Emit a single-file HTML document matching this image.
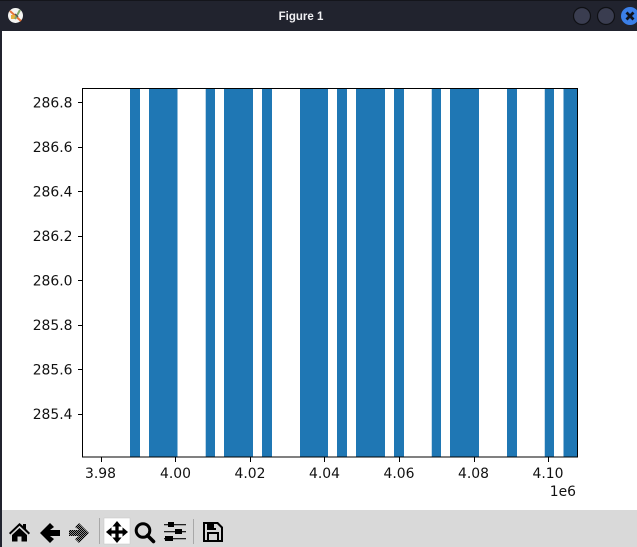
<!DOCTYPE html>
<html><head><meta charset="utf-8"><style>
html,body{margin:0;padding:0;width:637px;height:547px;overflow:hidden;background:#fff}
svg{display:block}
text{font-family:"DejaVu Sans",sans-serif}
</style></head><body>
<svg width="637" height="547" viewBox="0 0 637 547" xmlns="http://www.w3.org/2000/svg">
<rect width="637" height="547" fill="#fff"/>
<!-- title bar -->
<rect width="637" height="31" fill="#21232e"/>
<rect width="637" height="1" fill="#14151b"/>
<rect x="0" y="31" width="2" height="516" fill="#21232e"/>
<circle cx="15.500" cy="15.500" r="7.500" fill="#f4f4f2"/>
<path d="M10 11L21 21" stroke="#e8763a" stroke-width="2"/>
<path d="M11 15h5v4h-5z" fill="#e7b23f"/>
<path d="M15 19L20 10" stroke="#7fa86a" stroke-width="2"/>
<path d="M15 14l3 3" stroke="#555" stroke-width="1.500"/>
<text x="301" y="20" font-size="11.500" font-weight="bold" fill="#f0f0f3" text-anchor="middle" style='font-family:"Liberation Sans",sans-serif'>Figure 1</text>
<circle cx="582" cy="16" r="8.500" fill="#3a3d50" stroke="#0f1014" stroke-width="1.200"/>
<circle cx="606" cy="16" r="8.500" fill="#3a3d50" stroke="#0f1014" stroke-width="1.200"/>
<circle cx="630" cy="16" r="9" fill="#3b7fe8"/>
<path d="M626.500 12.500L633.500 19.500M633.500 12.500L626.500 19.500" stroke="#10131c" stroke-width="2.800"/>
<!-- bars -->
<g fill="#1f77b4">
<rect x="130" y="89" width="10" height="368"/>
<rect x="149" y="89" width="28" height="368"/>
<rect x="206" y="89" width="9" height="368"/>
<rect x="224" y="89" width="29" height="368"/>
<rect x="262" y="89" width="10" height="368"/>
<rect x="300" y="89" width="28" height="368"/>
<rect x="337" y="89" width="10" height="368"/>
<rect x="356" y="89" width="29" height="368"/>
<rect x="394" y="89" width="10" height="368"/>
<rect x="432" y="89" width="9" height="368"/>
<rect x="450" y="89" width="29" height="368"/>
<rect x="507" y="89" width="10" height="368"/>
<rect x="545" y="89" width="9" height="368"/>
<rect x="563.500" y="89" width="14" height="368"/>
</g>
<g fill="#8fbbd9">
<rect x="177" y="89" width="1" height="368"/>
<rect x="205" y="89" width="1" height="368" opacity=".6"/>
<rect x="431" y="89" width="1" height="368" opacity=".5"/>
<rect x="544" y="89" width="1" height="368" opacity=".5"/>
</g>
<!-- axes -->
<rect x="82.500" y="88.500" width="495" height="368.500" fill="none" stroke="#000" stroke-width="1"/>
<g stroke="#000" stroke-width="1">
<path d="M101.500 457v5M175.500 457v5M250.500 457v5M324.500 457v5M399.500 457v5M474.500 457v5M548.500 457v5"/>
<path d="M78 102.500h4.500M78 147.500h4.500M78 191.500h4.500M78 236.500h4.500M78 280.500h4.500M78 325.500h4.500M78 369.500h4.500M78 414.500h4.500"/>
</g>
<g font-size="13.900" fill="#111" text-anchor="middle">
<text x="100.500" y="478">3.98</text>
<text x="175.500" y="478">4.00</text>
<text x="250" y="478">4.02</text>
<text x="324.500" y="478">4.04</text>
<text x="399" y="478">4.06</text>
<text x="473.500" y="478">4.08</text>
<text x="548" y="478">4.10</text>
</g>
<text x="576" y="496" font-size="13.900" fill="#111" text-anchor="end">1e6</text>
<g font-size="13.900" fill="#111" text-anchor="end">
<text x="72.500" y="107.500">286.8</text>
<text x="72.500" y="152">286.6</text>
<text x="72.500" y="196.500">286.4</text>
<text x="72.500" y="241">286.2</text>
<text x="72.500" y="285.500">286.0</text>
<text x="72.500" y="330">285.8</text>
<text x="72.500" y="374.500">285.6</text>
<text x="72.500" y="419">285.4</text>
</g>
<!-- toolbar -->
<rect x="2" y="510" width="635" height="37" fill="#d9d9d9"/>
<rect x="99" y="518" width="1" height="26" fill="#a8a8a8"/>
<rect x="193" y="519" width="1" height="25" fill="#a8a8a8"/>
<rect x="104" y="518" width="26" height="26" fill="#fff" stroke="#c4c4c4" stroke-width=".5"/>
<!-- home -->
<path d="M19.500 523L9 533l1.300 1.500 9.200-8.700 9.200 8.700L30 533l-4-4v-5h-3v2z" fill="#000"/>
<path d="M12 535l7.500-7 7.500 7v6.500h-5.500v-5h-4v5H12z" fill="#000"/>
<!-- back -->
<path d="M50 523l4 4-4 3h10v6H50l4 3-4 4-10-10z" fill="#000"/>
<!-- forward (dimmed) -->
<defs><pattern id="d" width="2" height="2" patternUnits="userSpaceOnUse"><rect width="2" height="2" fill="#8a8a8a"/><rect width="1" height="1" fill="#000"/><rect x="1" y="1" width="1" height="1" fill="#000"/></pattern></defs>
<path d="M79 523l-4 4 4 3H69v6h10l-4 3 4 4 10-10z" fill="url(#d)"/>
<!-- move -->
<g transform="translate(117 532) scale(.92) translate(-117 -532)">
<path d="M117 520l5 6h-3.200v4.200H123V527l6 5-6 5v-3.200h-4.200V538H122l-5 6-5-6h3.200v-4.200H111v3.200l-6-5 6-5v3.200h4.200V526H112z" fill="#000"/>
</g>
<!-- zoom -->
<circle cx="143" cy="530.500" r="6.800" fill="none" stroke="#000" stroke-width="3"/>
<path d="M147.500 535.500l6 6" stroke="#000" stroke-width="3.600" stroke-linecap="round"/>
<!-- sliders -->
<g fill="#000">
<rect x="164" y="524" width="22" height="1.300" fill="#222"/><rect x="168" y="522" width="6" height="5"/>
<rect x="164" y="531" width="22" height="1.300" fill="#222"/><rect x="175" y="529" width="7" height="5"/>
<rect x="164" y="538" width="22" height="1.300" fill="#222"/><rect x="165" y="536" width="8" height="5"/>
</g>
<!-- save -->
<path fill-rule="evenodd" d="M203 522h15l5 5v15h-20zM205 524v16h2v-8h12v8h2v-12l-4-4h-1v6h-9v-6zM209 534v6h8v-6zM214 524v4h2v-4z" fill="#000"/>
</svg>
</body></html>
